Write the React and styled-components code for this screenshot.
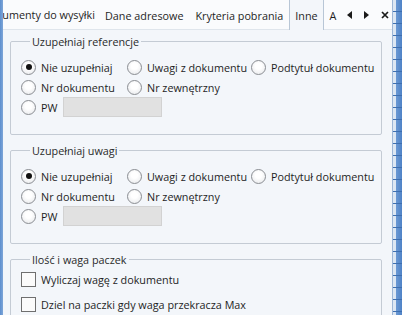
import styled, { createGlobalStyle } from "styled-components";

const GlobalStyle = createGlobalStyle`
  html, body {
    margin: 0;
    padding: 0;
    background: #f3f6fa;
  }
  body {
    font-family: "Open Sans", "Noto Sans", sans-serif;
    font-size: 10.8px;
    color: #1e1e1e;
  }
`;

const tabs = [
  { label: "Dane adresowe" },
  { label: "Kryteria pobrania" },
  { label: "Inne", active: true },
];

const Radio = ({ label, checked }) => (
  <Option>
    <Circle $checked={checked} />
    <span>{label}</span>
  </Option>
);

const RadioGroup = ({ title }) => (
  <Group>
    <Legend>{title}</Legend>
    <RadioGrid>
      <Radio label="Nie uzupełniaj" checked />
      <Radio label="Uwagi z dokumentu" />
      <Radio label="Podtytuł dokumentu" />
      <Radio label="Nr dokumentu" />
      <Radio label="Nr zewnętrzny" />
      <span />
      <PwRow>
        <Radio label="PW" />
        <Field />
      </PwRow>
    </RadioGrid>
  </Group>
);

const App = () => {
  return (
    <>
      <GlobalStyle />
      <Frame>
        <LeftEdge />
        <Main>
          <TabBar>
            <FirstTab>
              <span>Dokumenty do wysyłki</span>
            </FirstTab>
            {tabs.map((t) => (
              <Tab key={t.label} $active={t.active}>
                {t.label}
              </Tab>
            ))}
            <Tab>A</Tab>
            <TabTools>
              <svg width="5" height="8" viewBox="0 0 5 8">
                <path d="M5 0 L0 4 L5 8 Z" fill="#1a1a1a" />
              </svg>
              <svg width="5" height="8" viewBox="0 0 5 8">
                <path d="M0 0 L5 4 L0 8 Z" fill="#1a1a1a" />
              </svg>
              <svg width="8" height="8" viewBox="0 0 8 8">
                <path
                  d="M1 1 L7 7 M7 1 L1 7"
                  stroke="#1a1a1a"
                  strokeWidth="1.7"
                />
              </svg>
            </TabTools>
          </TabBar>

          <Content>
            <RadioGroup title="Uzupełniaj referencje" />
            <RadioGroup title="Uzupełniaj uwagi" />

            <Group>
              <Legend>Ilość i waga paczek</Legend>
              <CheckList>
                <Option>
                  <Box />
                  <span>Wyliczaj wagę z dokumentu</span>
                </Option>
                <Option>
                  <Box />
                  <span>Dziel na paczki gdy waga przekracza Max</span>
                </Option>
              </CheckList>
            </Group>
          </Content>
        </Main>
        <RightEdge />
      </Frame>
    </>
  );
};

const Frame = styled.div`
  display: flex;
  width: 402px;
  height: 315px;
  overflow: hidden;
`;

const LeftEdge = styled.div`
  width: 3px;
  flex-shrink: 0;
  background: linear-gradient(to right, #5d8fce, #7ea6d8);
`;

const RightEdge = styled.div`
  width: 9px;
  flex-shrink: 0;
  border-left: 1px solid #9db6d6;
  background: repeating-linear-gradient(
      to bottom,
      transparent 0,
      transparent 11px,
      #3e6fb0 11px,
      #3e6fb0 12px
    ),
    linear-gradient(to right, #dde7f3 0, #dde7f3 3px, #6a98d3 3px, #4f83c7);
`;

const Main = styled.div`
  flex: 1;
  display: flex;
  flex-direction: column;
  min-width: 0;
  background: #f3f6fa;
`;

const TabBar = styled.div`
  height: 29px;
  display: flex;
  align-items: stretch;
  background: #fafbfd;
  border-bottom: 1px solid #dfe5ec;
  flex-shrink: 0;
`;

const FirstTab = styled.div`
  width: 92px;
  flex-shrink: 0;
  display: flex;
  justify-content: flex-end;
  align-items: center;
  overflow: hidden;
  white-space: nowrap;
  padding-right: 4px;
`;

const Tab = styled.div`
  display: flex;
  align-items: center;
  padding: 0 5px;
  white-space: nowrap;
  margin-bottom: -1px;
  background: ${(p) => (p.$active ? "#f3f6fa" : "transparent")};
  border-left: 1px solid ${(p) => (p.$active ? "#b8c6d6" : "transparent")};
  border-right: 1px solid ${(p) => (p.$active ? "#b8c6d6" : "transparent")};
`;

const TabTools = styled.div`
  margin-left: auto;
  display: flex;
  align-items: center;
  gap: 12px;
  padding-right: 3px;
`;

const Content = styled.div`
  display: flex;
  flex-direction: column;
  gap: 8px;
  padding: 4px 10px 0 7px;
`;

const Group = styled.fieldset`
  margin: 0;
  padding: 8px 10px 17px 10px;
  border: 1px solid #c4cbd4;
  border-radius: 2px;
  min-width: 0;
`;

const Legend = styled.legend`
  padding: 0 2px;
  margin-left: 9px;
  color: #2a2a2a;
`;

const RadioGrid = styled.div`
  display: grid;
  grid-template-columns: 106px 124px auto;
  grid-auto-rows: 20px;
  align-items: center;
`;

const PwRow = styled.div`
  display: flex;
  align-items: center;
  gap: 6px;
  grid-column: 1 / 3;
`;

const Option = styled.label`
  display: flex;
  align-items: center;
  gap: 5px;
  white-space: nowrap;
`;

const Circle = styled.span`
  width: 13px;
  height: 13px;
  border-radius: 50%;
  border: 1px solid #8a8d92;
  background: radial-gradient(circle at 50% 40%, #ffffff 30%, #e3e5e8 100%);
  position: relative;
  flex-shrink: 0;

  &::after {
    content: "";
    position: absolute;
    left: 3.5px;
    top: 3.5px;
    width: 6px;
    height: 6px;
    border-radius: 50%;
    background: #111;
    display: ${(p) => (p.$checked ? "block" : "none")};
  }
`;

const Field = styled.div`
  width: 99px;
  height: 20px;
  background: #e1e1e1;
  border: 1px solid #d2d2d2;
  box-sizing: border-box;
`;

const CheckList = styled.div`
  display: flex;
  flex-direction: column;
  gap: 10px;
  margin-top: -3px;
`;

const Box = styled.span`
  width: 15px;
  height: 15px;
  box-sizing: border-box;
  border: 1px solid #6f6f6f;
  background: #fbfbfb;
  flex-shrink: 0;
`;

export default App;
